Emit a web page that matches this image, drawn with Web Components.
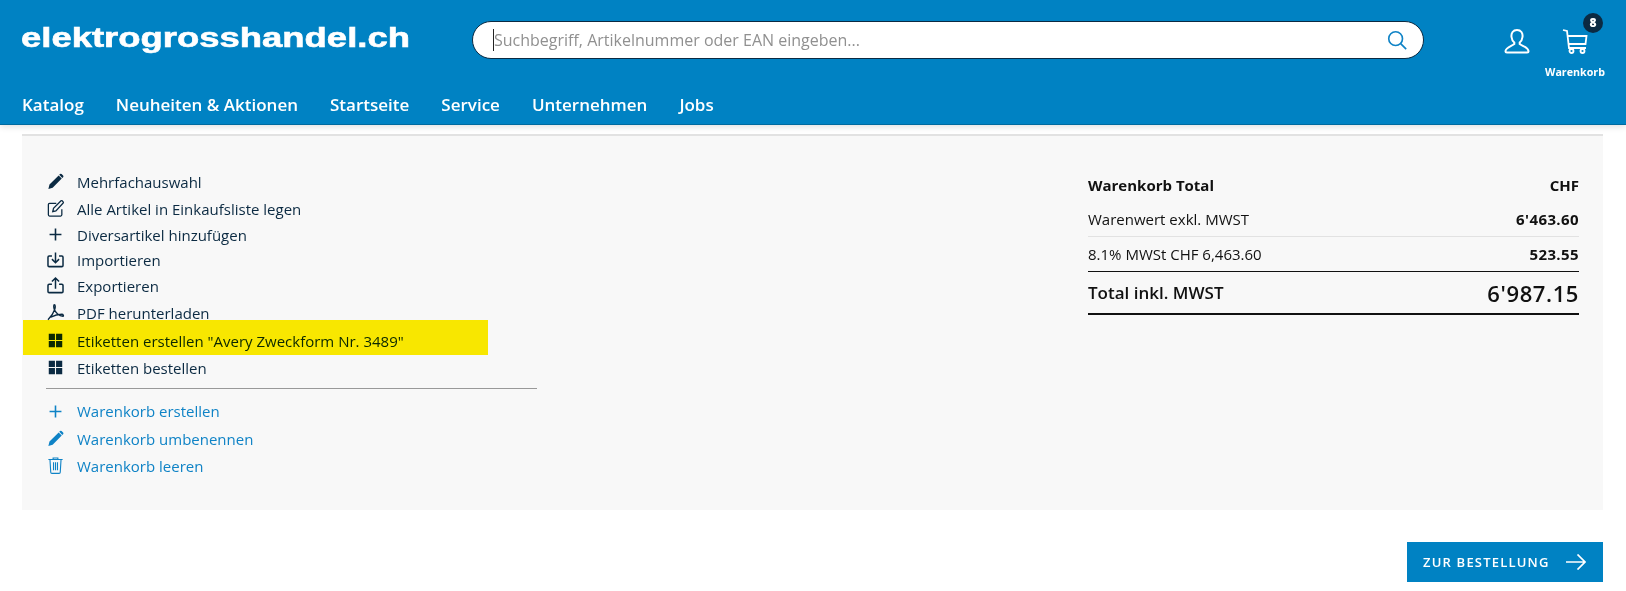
<!DOCTYPE html>
<html lang="de">
<head>
<meta charset="utf-8">
<title>Warenkorb</title>
<style>
  html, body { margin: 0; height: 591px; overflow: hidden; background: #fff; }
  body { font-family: "Open Sans", sans-serif; color: #0b2a42; }
</style>
</head>
<body>
<shop-header></shop-header>
<cart-panel>
  <div slot="actions">
    <action-row h="27" icon="pencil">Mehrfachauswahl</action-row>
    <action-row h="27" icon="edit">Alle Artikel in Einkaufsliste legen</action-row>
    <action-row h="25" icon="plus">Diversartikel hinzufügen</action-row>
    <action-row h="25" icon="import">Importieren</action-row>
    <action-row h="27" icon="export">Exportieren</action-row>
    <action-row h="28" icon="pdf">PDF herunterladen</action-row>
    <action-row h="27" icon="grid">Etiketten erstellen "Avery Zweckform Nr. 3489"</action-row>
    <action-row h="27" icon="grid">Etiketten bestellen</action-row>
  </div>
  <div slot="cart-actions">
    <action-row h="28" icon="plus" link>Warenkorb erstellen</action-row>
    <action-row h="27" icon="pencil" link>Warenkorb umbenennen</action-row>
    <action-row h="27" icon="trash" link>Warenkorb leeren</action-row>
  </div>
  <cart-totals slot="totals"></cart-totals>
</cart-panel>
<order-button>ZUR BESTELLUNG</order-button>

<script>
const ICONS = {
  pencil: '<path d="M3 21.500l1.400-5.600L16 4.300l3.900 3.900L8.400 19.900zM16.700 3.600l1-1a1.400 1.400 0 0 1 2 0l1.900 1.900a1.400 1.400 0 0 1 0 2l-1 1z" fill="currentColor"/>',
  edit: '<path d="M20 13v7a1.500 1.500 0 0 1-1.500 1.500h-14A1.500 1.500 0 0 1 3 20V7a1.500 1.500 0 0 1 1.500-1.500H13M8.500 16l1-4.200L19 2.300a1 1 0 0 1 1.400 0l1.300 1.300a1 1 0 0 1 0 1.400L12.500 15z" fill="none" stroke="currentColor" stroke-width="1.600"/>',
  plus: '<path d="M12 4.500v15M4.500 12h15" fill="none" stroke="currentColor" stroke-width="2"/>',
  import: '<path d="M7.500 7.500H4A1.500 1.500 0 0 0 2.500 9v10.500A1.500 1.500 0 0 0 4 21h16a1.500 1.500 0 0 0 1.500-1.500V9A1.500 1.500 0 0 0 20 7.500h-3.500M12 3v12.500M7.500 11.500L12 16l4.500-4.500" fill="none" stroke="currentColor" stroke-width="1.900"/>',
  export: '<path d="M7.500 10.500H4A1.500 1.500 0 0 0 2.500 12v7.500A1.500 1.500 0 0 0 4 21h16a1.500 1.500 0 0 0 1.500-1.500V12a1.500 1.500 0 0 0-1.500-1.500h-3.500M12 16V2.500M7.500 7L12 2.500 16.500 7" fill="none" stroke="currentColor" stroke-width="1.900"/>',
  pdf: '<path d="M10.500 1c1.500 0 1.500 3 .5 6C9.500 11.500 6 16.500 2.500 20M10.500 1c-1 0-1 3 0 6 1.500 4 6 8 11 8.500 1 0 .5-2.500-1.500-2.500-4 0-9 1-14 3.500" fill="none" stroke="currentColor" stroke-width="1.700"/>',
  grid: '<path d="M3.500 3.500h7.800v7.800H3.500zM12.700 3.500h7.800v7.800h-7.800zM3.500 12.700h7.800v7.800H3.500zM12.700 12.700h7.800v7.800h-7.800z" fill="currentColor"/>',
  trash: '<path d="M3 4.500h18M9 4.500V2.500h6v2M5 4.500l1 16a1.500 1.500 0 0 0 1.500 1.500h9a1.500 1.500 0 0 0 1.500-1.500l1-16M9.500 8v10M12 8v10M14.500 8v10" fill="none" stroke="currentColor" stroke-width="1.400"/>'
};

class ActionRow extends HTMLElement {
  constructor() {
    super();
    this.attachShadow({ mode: 'open' });
  }

  connectedCallback() {
    const h = this.getAttribute('h') || 26;
    const icon = ICONS[this.getAttribute('icon')] || '';
    const color = this.hasAttribute('link') ? '#0f83c6' : '#0b2a42';
    this.shadowRoot.innerHTML = `
      <style>
        :host { display: flex; align-items: center; height: ${h}px; color: ${color}; font-size: 15px; }
        svg { width: 19px; height: 19px; margin: 0 12px 0 0; flex: none; }
      </style>
      <svg viewBox="0 0 24 24">${icon}</svg>
      <slot></slot>
    `;
  }
}

class ShopHeader extends HTMLElement {
  constructor() {
    super();
    this.attachShadow({ mode: 'open' });
    this.shadowRoot.innerHTML = `
      <style>
        :host { display: block; height: 125px; background: #0082c3; border-bottom: 1px solid #006a9f; box-sizing: border-box; box-shadow: 0 2px 6px rgba(0,0,0,.12); color: #fff; position: relative; }
        .top { display: flex; align-items: flex-start; height: 93px; }
        .logo { width: 472px; flex: none; padding: 23px 0 0 21px; box-sizing: border-box; font: bold 27px "Liberation Sans", sans-serif; -webkit-text-stroke: .6px #fff; }
        .logo span { display: inline-block; transform: scaleX(1.35); transform-origin: left; }
        .search { width: 952px; height: 38px; margin: 21px 0 0; box-sizing: border-box; background: #fff; border: 1px solid #0b2a42; border-radius: 19px; display: flex; align-items: center; padding: 0 15px 0 20px; color: #909090; font-size: 16px; }
        .search span { flex: 1; border-left: 1px solid #222; line-height: 22px; white-space: nowrap; }
        .search svg { width: 22px; height: 22px; }
        .user { width: 26px; height: 26px; margin: 28px 0 0 80px; flex: none; }
        .cart { margin: 14px 0 0 15px; width: 60px; position: relative; display: flex; flex-direction: column; align-items: center; font-size: 10.700px; font-weight: 700; }
        .cart svg { width: 26px; height: 26px; margin-top: 14px; }
        .cart b { position: absolute; left: 38px; top: -1px; width: 20px; height: 20px; border-radius: 50%; background: #0b2a42; font-size: 12px; line-height: 20px; text-align: center; }
        .cart span { margin-top: 11px; }
        nav { display: flex; gap: 32px; padding-left: 22px; font-size: 17px; font-weight: 600; }
      </style>
      <div class="top">
        <div class="logo"><span>elektrogrosshandel.ch</span></div>
        <div class="search">
          <span>Suchbegriff, Artikelnummer oder EAN eingeben...</span>
          <svg viewBox="0 0 24 24" fill="none" stroke="#0f83c6" stroke-width="1.800"><circle cx="10.500" cy="10.500" r="7.500"/><path d="M16 16l6 6"/></svg>
        </div>
        <svg class="user" viewBox="0 0 26 26" fill="none" stroke="#fff" stroke-width="2"><path d="M13 2c-4 0-6 3-5.500 7 .3 2.500 1.500 4.500 2.800 5.500v1.500C8 18 2 19 1.500 23c0 1 .5 1.500 1.500 1.500h20c1 0 1.500-.5 1.500-1.500-.5-4-6.500-5-8.800-7v-1.500c1.300-1 2.500-3 2.800-5.500C19 5 17 2 13 2z"/></svg>
        <div class="cart">
          <b>8</b>
          <svg viewBox="0 0 26 26" fill="none" stroke="#fff" stroke-width="1.800"><path d="M1 2l4 1 2 17h17M6 8h18.500l-1 8H7"/><circle cx="9.500" cy="23" r="2"/><circle cx="20.500" cy="23" r="2"/></svg>
          <span>Warenkorb</span>
        </div>
      </div>
      <nav>
        <span>Katalog</span><span>Neuheiten &amp; Aktionen</span><span>Startseite</span><span>Service</span><span>Unternehmen</span><span>Jobs</span>
      </nav>
    `;
  }
}

class CartPanel extends HTMLElement {
  constructor() {
    super();
    this.attachShadow({ mode: 'open' });
    this.shadowRoot.innerHTML = `
      <style>
        :host { display: grid; grid-template-columns: 1fr 491px; margin: 9px 23px 0 22px; height: 376px; box-sizing: border-box; background: #f8f8f8; border-top: 2px solid #e2e2e2; padding: 32px 24px 0 24px; position: relative; }
        .left { width: 491px; }
        hr { border: 0; border-top: 1px solid #999; margin: 7px 0 8px; }
        .mark { position: absolute; left: 1px; top: 184px; width: 465px; height: 35px; background: #ffee00; mix-blend-mode: multiply; }
      </style>
      <div class="left">
        <slot name="actions"></slot>
        <hr>
        <slot name="cart-actions"></slot>
      </div>
      <slot name="totals"></slot>
      <div class="mark"></div>
    `;
  }
}

class CartTotals extends HTMLElement {
  constructor() {
    super();
    this.attachShadow({ mode: 'open' });
    this.shadowRoot.innerHTML = `
      <style>
        :host { display: block; color: #111; font-size: 15px; }
        .row { display: flex; justify-content: space-between; align-items: center; }
        b { font-weight: 700; }
        .head { height: 33px; }
        .sub { height: 35px; border-bottom: 1px solid #e2e2e2; }
        .tax { height: 34px; border-bottom: 1px solid #111; }
        .total { height: 41px; border-bottom: 2px solid #111; font-size: 17px; font-weight: 600; }
        .total span:last-child { font-size: 22px; letter-spacing: .6px; }
        .num { letter-spacing: .4px; }
      </style>
      <div class="row head"><b>Warenkorb Total</b><b>CHF</b></div>
      <div class="row sub"><span>Warenwert exkl. MWST</span><b class="num">6'463.60</b></div>
      <div class="row tax"><span>8.1% MWSt CHF 6,463.60</span><b class="num">523.55</b></div>
      <div class="row total"><span>Total inkl. MWST</span><span>6'987.15</span></div>
    `;
  }
}

class OrderButton extends HTMLElement {
  constructor() {
    super();
    this.attachShadow({ mode: 'open' });
    this.shadowRoot.innerHTML = `
      <style>
        :host { display: flex; align-items: center; justify-content: space-between; width: 196px; height: 40px; box-sizing: border-box; margin: 32px 23px 0 auto; padding: 0 17px 0 16px; background: #0082c3; color: #fff; font-size: 13px; font-weight: 600; letter-spacing: 1.200px; }
        svg { width: 20px; height: 16px; }
      </style>
      <slot></slot>
      <svg viewBox="0 0 20 16" fill="none" stroke="#fff" stroke-width="1.700"><path d="M0 8h19M11.500.5L19 8l-7.500 7.500"/></svg>
    `;
  }
}

customElements.define('action-row', ActionRow);
customElements.define('shop-header', ShopHeader);
customElements.define('cart-panel', CartPanel);
customElements.define('cart-totals', CartTotals);
customElements.define('order-button', OrderButton);
</script>
</body>
</html>
